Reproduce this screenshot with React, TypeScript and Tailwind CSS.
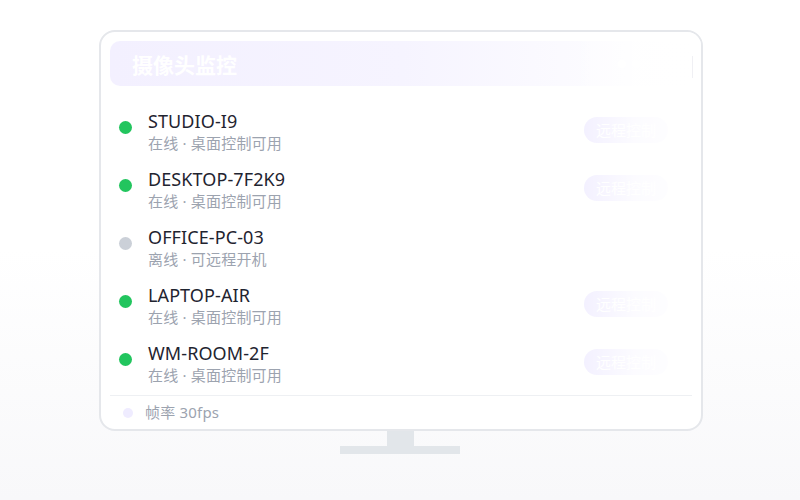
import React from 'react';

const devices = [
  { name: 'STUDIO-I9', online: true, note: '在线 · 桌面控制可用' },
  { name: 'DESKTOP-7F2K9', online: true, note: '在线 · 桌面控制可用' },
  { name: 'OFFICE-PC-03', online: false, note: '离线 · 可远程开机' },
  { name: 'LAPTOP-AIR', online: true, note: '在线 · 桌面控制可用' },
  { name: 'WM-ROOM-2F', online: true, note: '在线 · 桌面控制可用' },
];

const App = () => {
  return (
    <div
      className="w-[800px] h-[500px] bg-gradient-to-b from-white via-white to-[#f8f8fa] pt-[30px]"
      style={{ fontFamily: '"Noto Sans", "Noto Sans CJK SC", sans-serif' }}
    >
      {/* 모니터 화면 */}
      <div className="relative ml-[99px] w-[604px] h-[401px] rounded-[16px] border-2 border-[#e5e7eb] bg-white px-[9px] pt-[9px] flex flex-col overflow-hidden">
        <div className="h-[45px] rounded-[10px] bg-gradient-to-r from-[#f3f0ff] via-[#f6f4ff] to-white flex items-center px-[22px] shrink-0">
          <span className="text-[21px] leading-[28px] mt-[3px] font-bold text-white">摄像头监控</span>
          <div className="ml-auto flex items-center gap-[6px] mr-[30px]">
            <span className="w-[8px] h-[8px] rounded-full bg-white" />
            <span className="w-[8px] h-[8px] rounded-full bg-white" />
          </div>
        </div>

        <div className="flex flex-col gap-[14px] mt-[24px] pl-[9px] pr-[17px]">
          {devices.map((d) => (
            <div key={d.name} className="flex items-start h-[44px]">
              <span
                className={`mt-[11px] w-[13px] h-[13px] rounded-full shrink-0 ${
                  d.online ? 'bg-[#22c55e]' : 'bg-[#cbd0d8]'
                }`}
              />
              <div className="ml-[16px] flex-1 min-w-0">
                <div className="text-[18px] leading-[22px] text-[#1f2430] tracking-[0.1px]">{d.name}</div>
                <div className="text-[15px] leading-[22px] text-[#9ca3af] tracking-[0.2px]">{d.note}</div>
              </div>
              {d.online && (
                <button className="mt-[7px] mr-[7px] h-[26px] px-[12px] rounded-full bg-[#f1eeff] text-white text-[15px] leading-[26px]">
                  远程控制
                </button>
              )}
            </div>
          ))}
        </div>

        <div className="mt-auto border-t border-[#eef0f3] h-[34px] flex items-center pl-[13px] shrink-0">
          <span className="w-[10px] h-[10px] rounded-full bg-[#efecff]" />
          <span className="ml-[12px] text-[15px] text-[#9ca3af] tracking-[0.2px]">帧率 30fps</span>
        </div>

        {/* 오른쪽 페이드 */}
        <div className="absolute top-0 bottom-[40px] right-0 w-[130px] bg-gradient-to-l from-white via-white/80 to-transparent pointer-events-none" />
        <div className="absolute top-[24px] right-[8px] w-px h-[22px] bg-[#f0f0f4]" />
      </div>

      {/* 스탠드 */}
      <div className="flex flex-col items-center">
        <div className="w-[27px] h-[15px] bg-[#e2e6ea]" />
        <div className="w-[120px] h-[8px] bg-[#e2e6ea]" />
      </div>
    </div>
  );
};

export default App;
